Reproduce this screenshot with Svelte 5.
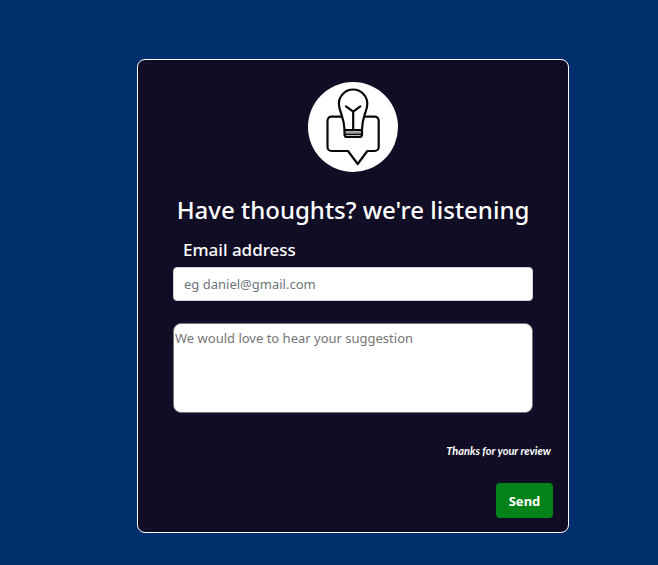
<script>
  let email = $state('');
  let suggestion = $state('');
</script>

<main>
  <form class="card" onsubmit={(e) => e.preventDefault()}>
    <svg class="logo" viewBox="0 0 90 90" role="img" aria-label="Suggestions">
      <circle cx="45" cy="45" r="45" fill="#fff" />
      <g fill="none" stroke="#080808" stroke-width="2.2" stroke-linejoin="round" stroke-linecap="round">
        <path d="M34 34.7H23.500a4 4 0 0 0-4 4V65a4 4 0 0 0 4 4h16.500l9.700 13L59.300 69H66.700a4 4 0 0 0 4-4V38.700a4 4 0 0 0-4-4H56.500" />
        <path d="M36.500 47.500C36.300 41 35 37 33.500 32.500C32 28.500 30.900 26 30.900 21.700A14.200 14.200 0 0 1 59.300 21.700C59.300 26 58.200 28.500 56.700 32.500C55.200 37 54.200 41 54 47.500" />
        <path d="M38 24.300L45.200 29.700L52.300 24.300M45.200 29.700V47" />
        <path d="M37 50.300H53" stroke="#999" stroke-width="2" />
        <path d="M36.500 48H54V52.800a2.200 2.200 0 0 1-2.200 2.200H38.700A2.200 2.200 0 0 1 36.500 52.800Z" />
        <path d="M37 52.400H53.500" stroke-width="1.600" />
      </g>
    </svg>
    <h1>Have thoughts? we're listening</h1>
    <label class="email-label" for="email">Email address</label>
    <input id="email" type="email" placeholder="eg daniel@gmail.com" bind:value={email} />
    <textarea aria-label="Suggestion" placeholder="We would love to hear your suggestion" bind:value={suggestion}></textarea>
    <p class="thanks">Thanks for your review</p>
    <button type="submit">Send</button>
  </form>
</main>

<style>
  :global(body) {
    margin: 0;
    background: #00306b;
  }
  main {
    box-sizing: border-box;
    min-height: 100vh;
    padding: 59px 24px 32px 72px;
    display: flex;
    justify-content: center;
    align-items: flex-start;
    font-family: "Segoe UI", "Noto Sans", sans-serif;
    color: #fff;
  }
  .card {
    box-sizing: border-box;
    width: 100%;
    max-width: 432px;
    padding: 22px 15px 14px;
    display: flex;
    flex-direction: column;
    background: #110d25;
    border: 1px solid #fff;
    border-radius: 8px;
  }
  .logo {
    width: 90px;
    height: 90px;
    align-self: center;
  }
  h1 {
    margin: 22px 0 0;
    font-size: 24px;
    line-height: 32px;
    font-weight: 500;
    text-align: center;
  }
  .email-label {
    margin: 12px 30px 0;
    font-size: 17px;
    line-height: 24px;
    font-weight: 500;
  }
  input,
  textarea {
    box-sizing: border-box;
    margin: 0 20px;
    background: #fff;
    color: #212529;
    font-family: inherit;
    font-size: 13px;
    line-height: 20px;
  }
  input {
    margin-top: 5px;
    height: 34px;
    padding: 0 10px;
    border: 1px solid #ced4da;
    border-radius: 4px;
  }
  input::placeholder {
    color: #6c757d;
    opacity: 1;
  }
  textarea {
    margin-top: 22px;
    height: 90px;
    padding: 4px 1px;
    border: 1px solid #767676;
    border-radius: 8px;
    resize: none;
  }
  textarea::placeholder {
    color: #757575;
    opacity: 1;
  }
  .thanks {
    margin: 28px 2px 0;
    align-self: flex-end;
    font-family: "Segoe Script", "Ink Free", "Lato", cursive;
    font-size: 11px;
    line-height: 20px;
    font-style: italic;
    font-weight: 700;
  }
  button {
    margin-top: 22px;
    align-self: flex-end;
    min-width: 57px;
    height: 35px;
    padding: 0 12px;
    background: #04821a;
    color: #fff;
    border: 0;
    border-radius: 4px;
    font-family: inherit;
    font-size: 13px;
    font-weight: 700;
    line-height: 20px;
    cursor: pointer;
  }
</style>
